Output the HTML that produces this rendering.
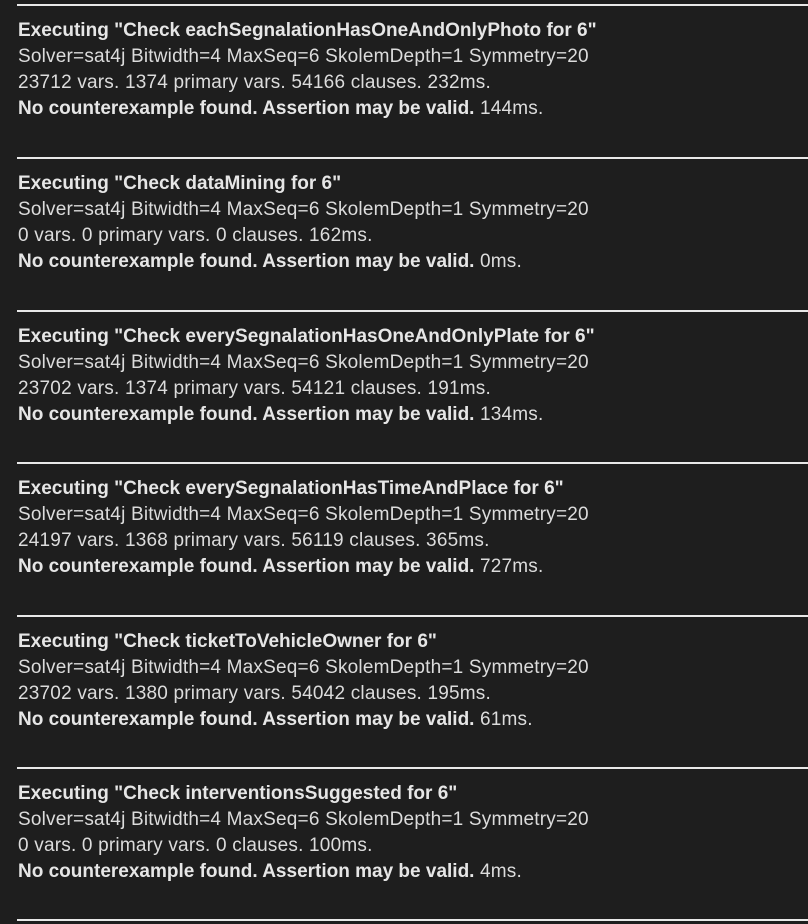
<!DOCTYPE html>
<html><head><meta charset="utf-8"><style>
html,body{margin:0;padding:0;background:#1e1e1e;width:808px;height:924px;overflow:hidden}
.b{position:absolute;left:0;width:808px}
.hr{position:absolute;left:17px;right:0;height:2px;background:#e8e8e8}
.t{position:absolute;left:18px;top:18px;font-family:"Liberation Sans",sans-serif;font-size:19px;line-height:26px;color:#dcdcdc;white-space:nowrap;letter-spacing:0.2px}
b{font-weight:bold;color:#e6e6e6;letter-spacing:0}
</style></head><body>
<div class="b" style="top:0"><div class="hr" style="top:4px"></div><div class="t"><b>Executing "Check eachSegnalationHasOneAndOnlyPhoto for 6"</b><br>Solver=sat4j Bitwidth=4 MaxSeq=6 SkolemDepth=1 Symmetry=20<br>23712 vars. 1374 primary vars. 54166 clauses. 232ms.<br><b>No counterexample found. Assertion may be valid.</b> 144ms.</div></div>
<div class="b" style="top:153px"><div class="hr" style="top:4px"></div><div class="t"><b>Executing "Check dataMining for 6"</b><br>Solver=sat4j Bitwidth=4 MaxSeq=6 SkolemDepth=1 Symmetry=20<br>0 vars. 0 primary vars. 0 clauses. 162ms.<br><b>No counterexample found. Assertion may be valid.</b> 0ms.</div></div>
<div class="b" style="top:306px"><div class="hr" style="top:4px"></div><div class="t"><b>Executing "Check everySegnalationHasOneAndOnlyPlate for 6"</b><br>Solver=sat4j Bitwidth=4 MaxSeq=6 SkolemDepth=1 Symmetry=20<br>23702 vars. 1374 primary vars. 54121 clauses. 191ms.<br><b>No counterexample found. Assertion may be valid.</b> 134ms.</div></div>
<div class="b" style="top:458px"><div class="hr" style="top:4px"></div><div class="t"><b>Executing "Check everySegnalationHasTimeAndPlace for 6"</b><br>Solver=sat4j Bitwidth=4 MaxSeq=6 SkolemDepth=1 Symmetry=20<br>24197 vars. 1368 primary vars. 56119 clauses. 365ms.<br><b>No counterexample found. Assertion may be valid.</b> 727ms.</div></div>
<div class="b" style="top:611px"><div class="hr" style="top:4px"></div><div class="t"><b>Executing "Check ticketToVehicleOwner for 6"</b><br>Solver=sat4j Bitwidth=4 MaxSeq=6 SkolemDepth=1 Symmetry=20<br>23702 vars. 1380 primary vars. 54042 clauses. 195ms.<br><b>No counterexample found. Assertion may be valid.</b> 61ms.</div></div>
<div class="b" style="top:763px"><div class="hr" style="top:4px"></div><div class="t"><b>Executing "Check interventionsSuggested for 6"</b><br>Solver=sat4j Bitwidth=4 MaxSeq=6 SkolemDepth=1 Symmetry=20<br>0 vars. 0 primary vars. 0 clauses. 100ms.<br><b>No counterexample found. Assertion may be valid.</b> 4ms.</div></div>
<div class="b" style="top:915px"><div class="hr" style="top:4px"></div></div>
</body></html>
